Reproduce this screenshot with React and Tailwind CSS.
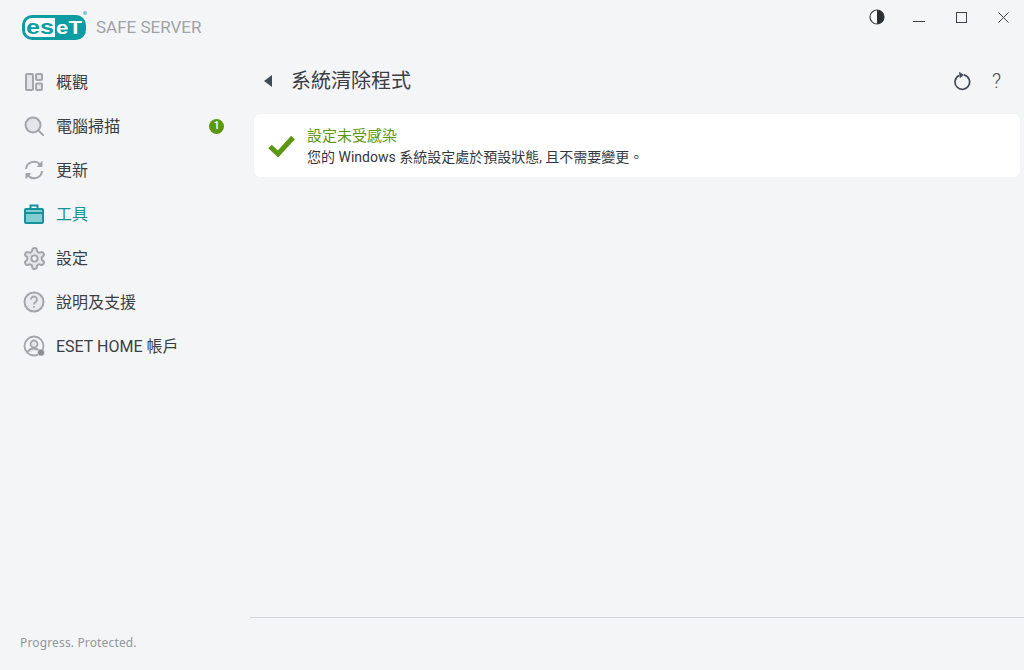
const cjk = "font-['Roboto','Noto_Sans_CJK_TC',sans-serif]";

function Logo() {
  return (
    <svg width="68" height="30" viewBox="0 0 68 30" className="shrink-0">
      <rect x="0" y="5" width="64" height="25" rx="10" fill="#0e9ca3" />
      <path d="M10 8h23v19H10c-4 0-7-3-7-7v-5c0-4 3-7 7-7z" fill="#fff" />
      <text x="4" y="24" fontFamily="'Liberation Sans',sans-serif" fontWeight="700" fontSize="21" fill="#0e9ca3" textLength="28" lengthAdjust="spacingAndGlyphs">es</text>
      <text x="34" y="24" fontFamily="'Liberation Sans',sans-serif" fontWeight="700" fontSize="19" fill="#fff" textLength="26" lengthAdjust="spacingAndGlyphs">eT</text>
      <circle cx="63" cy="3" r="2" fill="#7cc8cf" />
    </svg>
  );
}

function OverviewIcon() {
  return (
    <svg width="20" height="20" viewBox="0 0 20 20" fill="#e4e5e7" stroke="#a3a5a8" strokeWidth="2">
      <rect x="2" y="2" width="7" height="16" rx="1" />
      <rect x="12" y="2" width="6" height="6" rx="1" />
      <rect x="12" y="11.500" width="6" height="6.500" rx="1" />
    </svg>
  );
}

function SearchIcon() {
  return (
    <svg width="20" height="20" viewBox="0 0 20 20" fill="#e4e5e7" stroke="#a3a5a8" strokeWidth="2">
      <circle cx="9" cy="9" r="7.500" />
      <path d="M15 15l4 4" strokeLinecap="round" />
    </svg>
  );
}

function UpdateIcon() {
  return (
    <svg width="20" height="20" viewBox="0 0 20 20" fill="none" stroke="#a3a5a8" strokeWidth="2">
      <path d="M2 9a8 8 0 0 1 14-4.500l1.500 1.500" />
      <path d="M18 11a8 8 0 0 1-14 4.500L2.500 14" />
      <path d="M18 1.500V6.500h-4.500z" fill="#a3a5a8" strokeWidth="1" />
      <path d="M2 18.500V13.500h4.500z" fill="#a3a5a8" strokeWidth="1" />
    </svg>
  );
}

function ToolsIcon() {
  return (
    <svg width="20" height="20" viewBox="0 0 20 20" fill="none" stroke="#16929a" strokeWidth="2">
      <path d="M6.500 5V1.500h7V5" />
      <rect x="1" y="5" width="18" height="14" rx="1" fill="#83cdd2" />
      <path d="M1 9h18" />
    </svg>
  );
}

function GearIcon() {
  return (
    <svg width="25" height="25" viewBox="0 0 24 24" fill="#e4e5e7" stroke="#a3a5a8" strokeWidth="1.900" strokeLinejoin="round" className="shrink-0">
      <path d="M12.220 2h-.44a2 2 0 0 0-2 2v.18a2 2 0 0 1-1 1.730l-.43.250a2 2 0 0 1-2 0l-.150-.080a2 2 0 0 0-2.730.730l-.220.380a2 2 0 0 0 .730 2.730l.150.100a2 2 0 0 1 1 1.720v.510a2 2 0 0 1-1 1.740l-.150.090a2 2 0 0 0-.730 2.730l.220.380a2 2 0 0 0 2.730.730l.150-.080a2 2 0 0 1 2 0l.430.250a2 2 0 0 1 1 1.730V20a2 2 0 0 0 2 2h.44a2 2 0 0 0 2-2v-.18a2 2 0 0 1 1-1.730l.430-.250a2 2 0 0 1 2 0l.150.080a2 2 0 0 0 2.730-.730l.220-.390a2 2 0 0 0-.730-2.730l-.150-.080a2 2 0 0 1-1-1.740v-.500a2 2 0 0 1 1-1.740l.150-.090a2 2 0 0 0 .730-2.730l-.220-.380a2 2 0 0 0-2.730-.730l-.150.080a2 2 0 0 1-2 0l-.430-.250a2 2 0 0 1-1-1.730V4a2 2 0 0 0-2-2z" />
      <circle cx="12" cy="12" r="3" fill="#f4f5f7" />
    </svg>
  );
}

function HelpIcon() {
  return (
    <svg width="22" height="22" viewBox="0 0 22 22" fill="#eaebed" stroke="#a3a5a8" strokeWidth="2">
      <circle cx="11" cy="11" r="9.500" />
      <path d="M8 8.500a3 3 0 1 1 4.500 2.600c-1 .6-1.500 1.200-1.500 2.400" fill="none" strokeWidth="1.800" />
      <circle cx="11" cy="16" r="1" fill="#a3a5a8" stroke="none" />
    </svg>
  );
}

function AccountIcon() {
  return (
    <svg width="22" height="22" viewBox="0 0 22 22" fill="none" stroke="#a3a5a8" strokeWidth="1.800">
      <circle cx="11" cy="11" r="9.500" fill="#f4f5f7" />
      <circle cx="11" cy="9" r="3.500" fill="#e4e5e7" />
      <path d="M4.500 17.500c1-3 3.500-4 6.500-4s4 .5 5 2" fill="#e4e5e7" />
      <circle cx="18" cy="17.500" r="3.500" fill="#8b8d91" stroke="#f4f5f7" strokeWidth="0.500" />
    </svg>
  );
}

function ContrastIcon() {
  return (
    <svg width="16" height="16" viewBox="0 0 16 16">
      <circle cx="8" cy="8" r="7" fill="#fff" stroke="#3a3f45" strokeWidth="1.200" />
      <path d="M8 1a7 7 0 0 1 0 14z" fill="#2b2f34" />
    </svg>
  );
}

function RefreshIcon() {
  return (
    <svg width="18" height="20" viewBox="0 0 18 20" fill="none" stroke="#3f4a54" strokeWidth="1.700">
      <path d="M5 4.500a7.300 7.300 0 1 0 5-.6" />
      <path d="M5.500 1.500l4 2.500-3.500 2.500z" fill="#3f4a54" strokeWidth="0.800" />
    </svg>
  );
}

function CloseIcon() {
  return (
    <svg width="11" height="11" viewBox="0 0 11 11" stroke="#3f4347" strokeWidth="1">
      <path d="M.5.500l10 10M10.500.500l-10 10" />
    </svg>
  );
}

function CheckIcon() {
  return (
    <svg width="27" height="22" viewBox="0 0 27 22" fill="none" stroke="#5c9710" strokeWidth="5" className="shrink-0">
      <path d="M2 11.500l8 7.500L25 2.500" />
    </svg>
  );
}

const items = [
  { label: "概觀", icon: <OverviewIcon /> },
  { label: "電腦掃描", icon: <SearchIcon />, badge: "1" },
  { label: "更新", icon: <UpdateIcon /> },
  { label: "工具", icon: <ToolsIcon />, active: true },
  { label: "設定", icon: <GearIcon /> },
  { label: "說明及支援", icon: <HelpIcon /> },
  { label: "ESET HOME 帳戶", icon: <AccountIcon /> },
];

function NavItem({ item }) {
  return (
    <div className="h-11 flex items-center pl-[23px] pr-[26px]">
      <div className="w-[22px] h-[22px] flex items-center justify-center shrink-0">{item.icon}</div>
      <span className={"ml-[11px] text-base leading-[22px] pt-[2px] " + (item.active ? "text-[#16929a]" : "text-[#3a3f45]")}>
        {item.label}
      </span>
      {item.badge && (
        <span className="ml-auto w-[15px] h-[15px] rounded-full bg-[#5c9710] text-white text-[10px] font-semibold leading-none flex items-center justify-center">
          {item.badge}
        </span>
      )}
    </div>
  );
}

export default function App() {
  return (
    <div className={"w-[1024px] h-[670px] bg-[#f4f5f7] flex overflow-hidden " + cjk}>
      <aside className="w-[250px] shrink-0 flex flex-col">
        <div className="h-[60px] flex items-start pl-[22px] pt-[10px]">
          <Logo />
          <span className="ml-[6px] mt-[6px] text-[17px] leading-[22px] text-[#a0a3a7] whitespace-nowrap">SAFE SERVER</span>
        </div>
        <nav>
          {items.map((item) => (
            <NavItem key={item.label} item={item} />
          ))}
        </nav>
        <div className="mt-auto pl-5 pb-[19px] text-xs text-[#93969b] tracking-[0.15px] font-['Noto_Sans',sans-serif]">Progress. Protected.</div>
      </aside>

      <main className="flex-1 flex flex-col min-w-0">
        <div className="h-[61px] flex justify-end items-start">
          <div className="w-[42px] h-[34px] flex items-center justify-center"><ContrastIcon /></div>
          <div className="w-[42px] h-[34px] flex items-center justify-center pt-[9px]"><div className="w-3 h-px bg-[#3f4347]" /></div>
          <div className="w-[42px] h-[34px] flex items-center justify-center"><div className="w-[11px] h-[11px] border border-[#3f4347]" /></div>
          <div className="w-[42px] h-[34px] flex items-center justify-center"><CloseIcon /></div>
        </div>
        <div className="h-[38px] flex items-center pl-[14px] pr-[23px] mt-[1px]">
          <span className="w-0 h-0 border-y-[6px] border-y-transparent border-r-[8px] border-r-[#3f4a54]" />
          <h1 className="ml-[19px] text-xl font-normal text-[#3a3f45]">系統清除程式</h1>
          <div className="ml-auto"><RefreshIcon /></div>
          <span className="ml-[20px] text-xl font-light leading-none text-[#3f4a54]">?</span>
        </div>
        <section className="mt-[14px] mx-1 h-[63px] bg-white rounded-md flex items-center pl-[14px] shadow-[0_0_2px_rgba(0,0,0,0.04)]">
          <CheckIcon />
          <div className="ml-[12px] leading-[22px]">
            <div className="text-[15px] text-[#5c9710]">設定未受感染</div>
            <div className="text-sm text-[#33373b]">您的 Windows 系統設定處於預設狀態, 且不需要變更。</div>
          </div>
        </section>
        <div className="mt-auto mb-[52px] border-t border-[#d3d5d8]" />
      </main>
    </div>
  );
}
